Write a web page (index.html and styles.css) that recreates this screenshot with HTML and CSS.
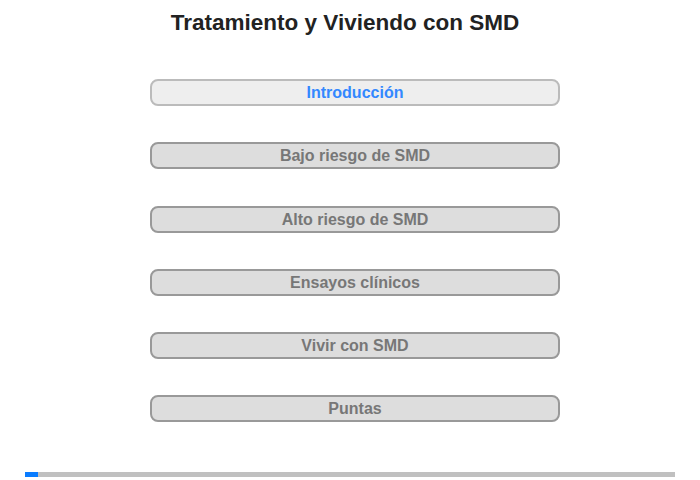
FILE: index.html
```html
<!DOCTYPE html>
<html>
<head>
<meta charset="utf-8">
<link rel="stylesheet" href="styles.css">
</head>
<body>
<div class="page">
  <h1 class="title">Tratamiento y Viviendo con SMD</h1>
  <nav class="menu">
    <div class="item active">Introducción</div>
    <div class="item">Bajo riesgo de SMD</div>
    <div class="item">Alto riesgo de SMD</div>
    <div class="item">Ensayos clínicos</div>
    <div class="item">Vivir con SMD</div>
    <div class="item">Puntas</div>
  </nav>
  <div class="progress"><div class="progress-fill"></div></div>
</div>
</body>
</html>
```
FILE: styles.css
```css
html, body {
  margin: 0;
  padding: 0;
  background: #fff;
}
.page {
  width: 700px;
  height: 480px;
  display: flex;
  flex-direction: column;
  font-family: "Liberation Sans", Arial, sans-serif;
}
.title {
  margin: 9px 0 0 0;
  font-size: 22.5px;
  font-weight: bold;
  color: #222;
  text-align: center;
  line-height: 28px;
  padding-right: 10px;
}
.menu {
  display: flex;
  flex-direction: column;
  gap: 36.25px;
  margin: 42px 0 0 150px;
  width: 410px;
}
.item {
  box-sizing: border-box;
  height: 27px;
  border: 2px solid #999;
  border-radius: 8px;
  background: #ddd;
  color: #777;
  font-size: 16px;
  font-weight: bold;
  text-align: center;
  line-height: 23px;
}
.item.active {
  background: #eee;
  border-color: #bbb;
  color: #3388ff;
}
.progress {
  margin: 50px 0 0 25px;
  width: 650px;
  height: 5px;
  background: #c0c0c0;
}
.progress-fill {
  width: 13px;
  height: 100%;
  background: #0a7cff;
}
```
